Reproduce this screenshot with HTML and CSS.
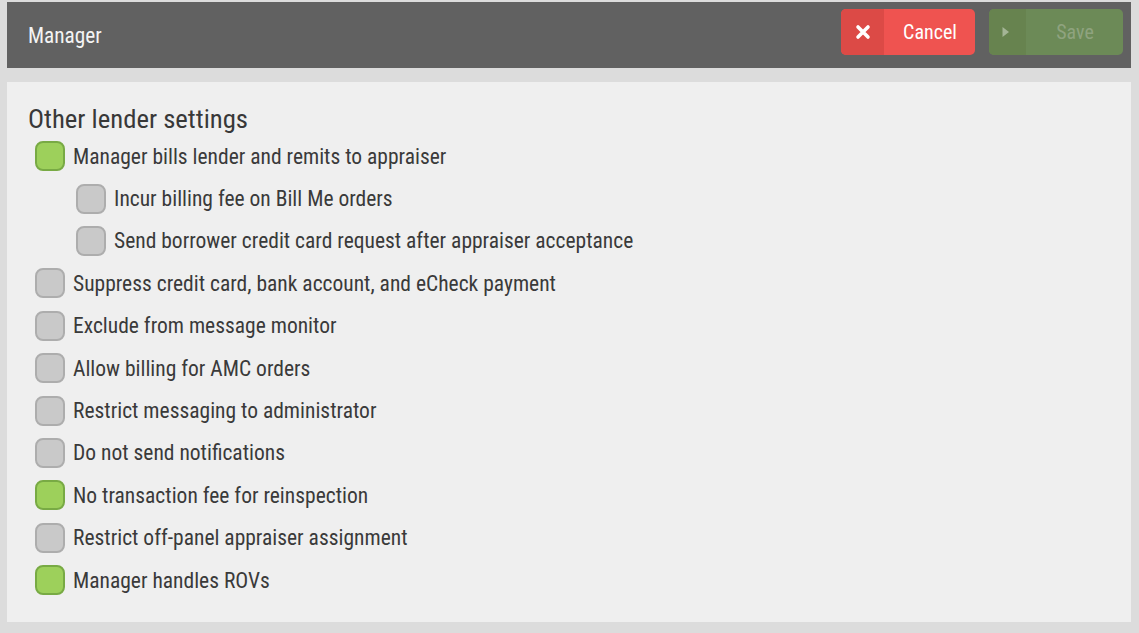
FILE: index.html
```html
<!DOCTYPE html>
<html>
<head>
<meta charset="utf-8">
<link rel="stylesheet" href="styles.css">
</head>
<body>
<header class="topbar">
  <div class="title">Manager</div>
  <div class="actions">
    <button class="btn btn-cancel">
      <span class="btn-icon">
        <svg width="16" height="16" viewBox="0 0 16 16"><path d="M3 3 L13 13 M13 3 L3 13" stroke="#fff" stroke-width="3.6" stroke-linecap="round"/></svg>
      </span>
      <span class="btn-label">Cancel</span>
    </button>
    <button class="btn btn-save">
      <span class="btn-icon">
        <svg width="10" height="12" viewBox="0 0 10 12"><path d="M1.5 1 L8 6 L1.5 11 Z" fill="#a4b596"/></svg>
      </span>
      <span class="btn-label">Save</span>
    </button>
  </div>
</header>
<main class="panel">
  <h2 class="section-title">Other lender settings</h2>
  <ul class="options">
    <li class="opt"><span class="cb on"></span><span>Manager bills lender and remits to appraiser</span></li>
    <li class="opt sub"><span class="cb"></span><span>Incur billing fee on Bill Me orders</span></li>
    <li class="opt sub"><span class="cb"></span><span>Send borrower credit card request after appraiser acceptance</span></li>
    <li class="opt"><span class="cb"></span><span>Suppress credit card, bank account, and eCheck payment</span></li>
    <li class="opt"><span class="cb"></span><span>Exclude from message monitor</span></li>
    <li class="opt"><span class="cb"></span><span>Allow billing for AMC orders</span></li>
    <li class="opt"><span class="cb"></span><span>Restrict messaging to administrator</span></li>
    <li class="opt"><span class="cb"></span><span>Do not send notifications</span></li>
    <li class="opt"><span class="cb on"></span><span>No transaction fee for reinspection</span></li>
    <li class="opt"><span class="cb"></span><span>Restrict off-panel appraiser assignment</span></li>
    <li class="opt"><span class="cb on"></span><span>Manager handles ROVs</span></li>
  </ul>
</main>
</body>
</html>
```
FILE: styles.css
```css
html, body {
  margin: 0;
  padding: 0;
}
body {
  background: #dcdcdc;
  font-family: "Roboto Condensed", Roboto, "Liberation Sans", sans-serif;
  color: #3a3a3a;
  padding: 2px 8px 0 7px;
  height: 633px;
  box-sizing: border-box;
}
.topbar {
  height: 66px;
  background: #616161;
  display: flex;
  align-items: center;
  justify-content: space-between;
  padding: 0 8px 0 21px;
  box-sizing: border-box;
}
.title {
  color: #f4f4f4;
  font-size: 21.3px;
  padding-top: 1px;
}
.actions {
  display: flex;
  gap: 14px;
  margin-top: -6px;
}
.btn {
  width: 134px;
  height: 46px;
  border: 0;
  padding: 0;
  border-radius: 5px;
  display: flex;
  align-items: stretch;
  overflow: hidden;
  font-family: inherit;
  font-size: 20px;
  cursor: pointer;
}
.btn-icon {
  width: 43px;
  display: flex;
  align-items: center;
  justify-content: center;
}
.btn-label {
  flex: 1;
  display: flex;
  align-items: center;
  justify-content: center;
  padding-left: 1px;
}
.btn-cancel {
  background: #ef5350;
  color: #fff;
}
.btn-cancel .btn-icon {
  background: #dc4a46;
}
.btn-save {
  background: #6c8a57;
  color: #8fa37f;
}
.btn-save .btn-icon {
  width: 34px;
  background: #67834f;
  padding-right: 3px;
}
.panel {
  margin-top: 14px;
  height: 540px;
  background: #efefef;
  padding: 22px 21px 0 21px;
  box-sizing: border-box;
}
.section-title {
  margin: 0;
  font-weight: 400;
  font-size: 26.7px;
  line-height: 30px;
  color: #383838;
}
.options {
  list-style: none;
  margin: 0;
  padding: 1px 0 0 7px;
}
.opt {
  height: 42.4px;
  display: flex;
  align-items: center;
  gap: 8px;
  font-size: 21.5px;
}
.opt.sub {
  padding-left: 41px;
}
.cb {
  width: 30px;
  height: 30px;
  box-sizing: border-box;
  border-radius: 8px;
  background: #c9c9c9;
  border: 2px solid #adadad;
  flex: none;
}
.cb.on {
  background: #9dd05b;
  border-color: #78aa44;
}
```
